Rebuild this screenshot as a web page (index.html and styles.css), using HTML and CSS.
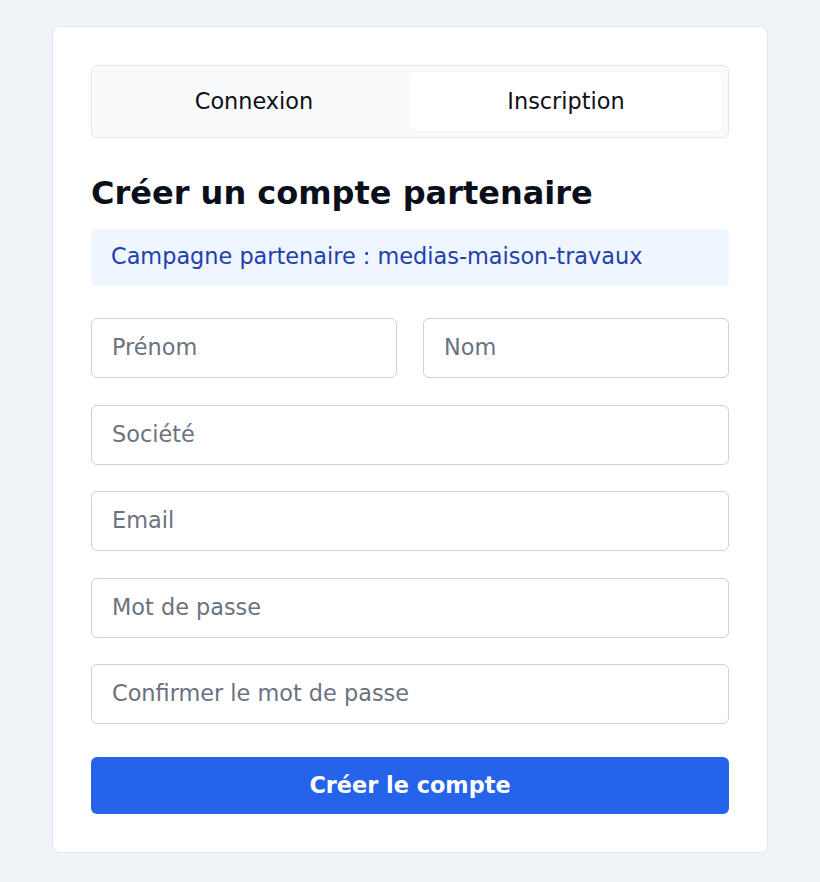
FILE: index.html
```html
<!DOCTYPE html>
<html lang="fr">
<head>
<meta charset="utf-8">
<title>Créer un compte partenaire</title>
<link rel="stylesheet" href="styles.css">
</head>
<body>
<div class="card">
  <div class="tabs">
    <button class="tab" type="button">Connexion</button>
    <button class="tab active" type="button">Inscription</button>
  </div>
  <h1 class="title">Créer un compte partenaire</h1>
  <div class="notice">Campagne partenaire : medias-maison-travaux</div>
  <form class="form">
    <div class="row">
      <input class="field" type="text" placeholder="Prénom">
      <input class="field" type="text" placeholder="Nom">
    </div>
    <input class="field" type="text" placeholder="Société">
    <input class="field" type="email" placeholder="Email">
    <input class="field" type="password" placeholder="Mot de passe">
    <input class="field" type="password" placeholder="Confirmer le mot de passe">
    <button class="submit" type="button">Créer le compte</button>
  </form>
</div>
</body>
</html>
```

FILE: styles.css
```css
* { box-sizing: border-box; }
html, body { margin: 0; padding: 0; }
body {
  background: #f0f4f8;
  font-family: "DejaVu Sans", Verdana, sans-serif;
  color: #111827;
}
.card {
  margin: 26px 0 0 52px;
  width: 716px;
  background: #ffffff;
  border: 1px solid #e2e8f0;
  border-radius: 8px;
  padding: 38px;
}
.tabs {
  display: grid;
  grid-template-columns: 1fr 1fr;
  height: 73px;
  padding: 6px;
  background: #f8fafc;
  border: 1px solid #e2e8f0;
  border-radius: 6px;
}
.tab {
  font-family: inherit;
  font-size: 22.4px;
  color: #0f0f14;
  background: transparent;
  border: 0;
  border-radius: 6px;
  padding: 0 0 2px;
  cursor: pointer;
}
.tab.active {
  background: #ffffff;
  box-shadow: 0 1px 2px rgba(15, 23, 42, 0.04);
}
.title {
  margin: 37px 0 17px;
  font-size: 32px;
  font-weight: bold;
  line-height: 37px;
  color: #0b0f1c;
}
.notice {
  background: #eff6ff;
  color: #1e40af;
  font-size: 22.4px;
  line-height: 25px;
  padding: 15px 20px 17px;
  border-radius: 6px;
}
.form {
  margin: 32px 0 0;
  display: flex;
  flex-direction: column;
  gap: 26.5px;
}
.row {
  display: grid;
  grid-template-columns: 1fr 1fr;
  gap: 26px;
}
.field {
  display: block;
  width: 100%;
  height: 60px;
  padding: 0 20px 2px;
  font-family: inherit;
  font-size: 22.4px;
  color: #111827;
  background: #ffffff;
  border: 1px solid #cbd2da;
  border-radius: 6px;
  outline: none;
}
.field::placeholder { color: #6b7280; opacity: 1; }
.submit {
  margin-top: 6.5px;
  height: 57px;
  width: 100%;
  padding: 0 0 2px;
  background: #2563eb;
  color: #ffffff;
  border: 0;
  border-radius: 6px;
  font-family: inherit;
  font-size: 22.4px;
  font-weight: bold;
  cursor: pointer;
}
```
